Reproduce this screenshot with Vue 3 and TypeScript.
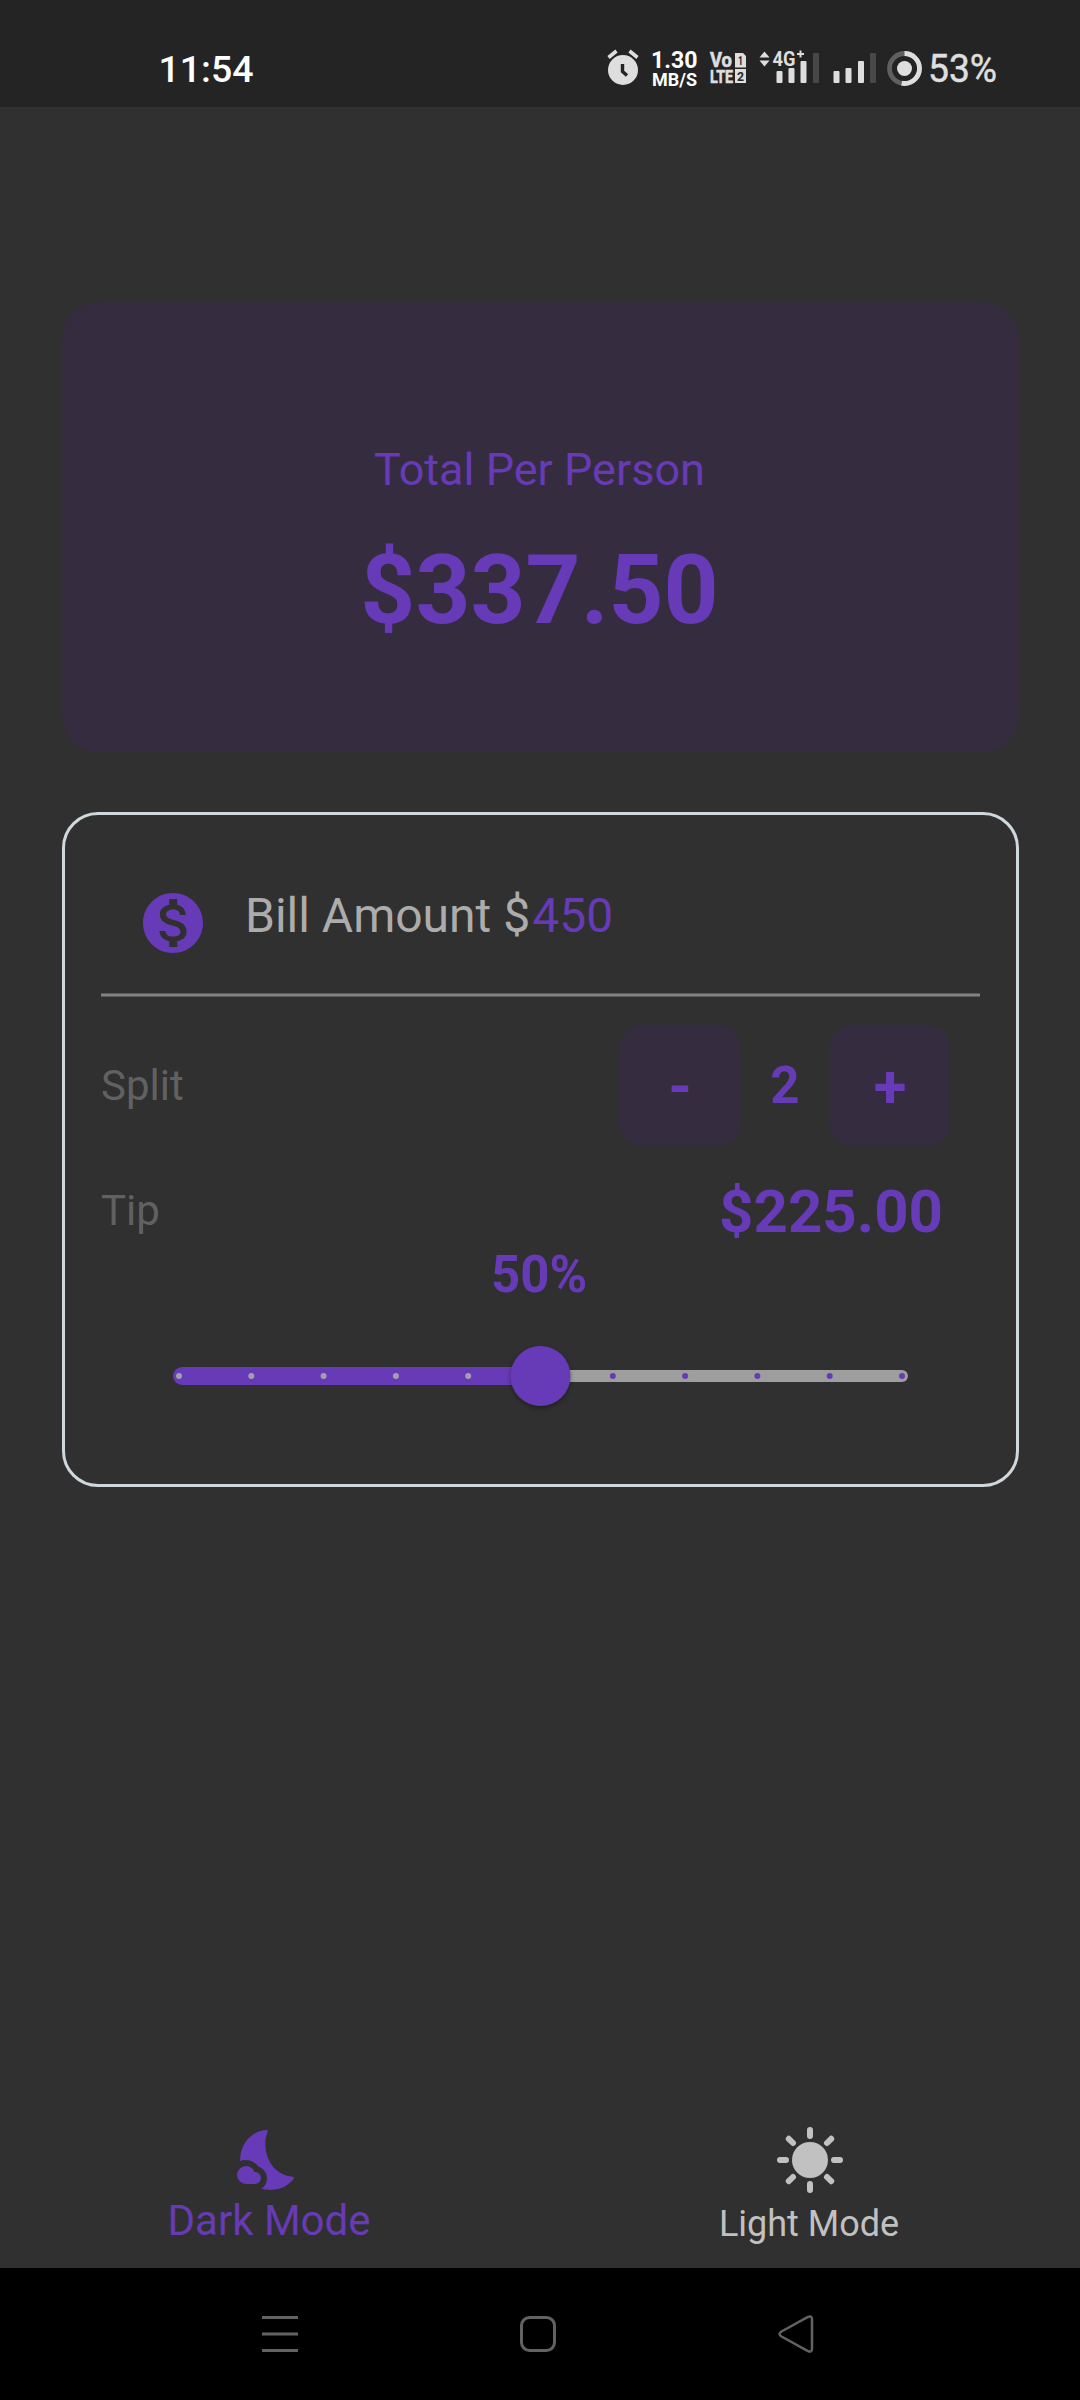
<script setup lang="ts">
import { computed, ref } from 'vue'

const bill = ref<number>(450)
const people = ref<number>(2)
const tipPercent = ref<number>(50)

const tip = computed<number>(() => (bill.value * tipPercent.value) / 100)
const perPerson = computed<number>(() => (bill.value + tip.value) / people.value)

const STOPS = 10
const TRACK_START = 6
const TRACK_LENGTH = 723
const stopX = (index: number): number => TRACK_START + (TRACK_LENGTH * index) / STOPS
const ticks = Array.from({ length: STOPS + 1 }, (_, i) => ({ x: stopX(i), value: i * 10 }))
const thumbX = computed<number>(() => stopX(tipPercent.value / 10))

const money = (value: number): string => `$${value.toFixed(2)}`

const changePeople = (delta: number): void => {
  people.value = Math.max(1, people.value + delta)
}
</script>

<template>
  <div class="screen">
    <header class="status">
      <svg width="1080" height="107" viewBox="0 0 1080 107">
        <text class="clock" x="158.500" y="82" textLength="95" lengthAdjust="spacingAndGlyphs">11:54</text>

        <!-- alarm -->
        <circle cx="623" cy="70" r="15" fill="#dedede" />
        <path d="M608.5 57.500l8-6.500M637.500 57.500l-8-6.500" stroke="#dedede" stroke-width="3.600" />
        <path d="M622.500 64v7.500l4.500 4" fill="none" stroke="#242424" stroke-width="3.400" />

        <text class="speed" x="651" y="68" font-size="24.500" textLength="46.500" lengthAdjust="spacingAndGlyphs">1.30</text>
        <text class="speed" x="652" y="86" font-size="18.500" textLength="45" lengthAdjust="spacingAndGlyphs">MB/S</text>

        <!-- VoLTE -->
        <text class="lte" x="710" y="67" font-size="19.500" textLength="22" lengthAdjust="spacingAndGlyphs">Vo</text>
        <text class="lte" x="710" y="83" font-size="18.500" textLength="23" lengthAdjust="spacingAndGlyphs">LTE</text>
        <path d="M735 53h8l3 3v11.500h-11zM735 69h11v14h-11z" fill="#dedede" />
        <text class="sim" x="738" y="65" font-size="12.500" textLength="5" lengthAdjust="spacingAndGlyphs">1</text>
        <text class="sim" x="737" y="81" font-size="13.500" textLength="7" lengthAdjust="spacingAndGlyphs">2</text>

        <!-- mobile data signal -->
        <path d="M759.500 57.500l5-6 5 6zM759.500 60.500l5 6 5-6z" fill="#dedede" />
        <text class="net" x="772.500" y="66" font-size="20.500" textLength="23" lengthAdjust="spacingAndGlyphs">4G</text>
        <path d="M797 54h7M800.500 50.500v7" stroke="#dedede" stroke-width="2" />
        <g fill="#dedede">
          <rect x="776.500" y="71" width="6" height="12" rx="1" />
          <rect x="788.500" y="68" width="6" height="15" rx="1" />
          <rect x="800.500" y="61" width="6" height="22" rx="1" />
          <rect x="833.500" y="71" width="6" height="12" rx="1" />
          <rect x="845.500" y="68" width="6" height="15" rx="1" />
          <rect x="858" y="61" width="6" height="22" rx="1" />
        </g>
        <g fill="#484848">
          <rect x="813" y="53" width="6" height="30" rx="1" />
          <rect x="870" y="53" width="6" height="30" rx="1" />
        </g>

        <!-- battery -->
        <circle cx="904.500" cy="68.500" r="15" fill="none" stroke="#606060" stroke-width="4.800" />
        <path d="M904.500 53.500a15 15 0 0 1 0 30q-1.500 0-2.800-.3" fill="none" stroke="#dedede" stroke-width="4.800" />
        <circle cx="904.500" cy="68.500" r="7.500" fill="#dedede" />
        <text class="battery" x="928" y="82" textLength="69" lengthAdjust="spacingAndGlyphs">53%</text>
      </svg>
    </header>

    <main class="content">
      <section class="total">
        <div class="total-label">Total Per Person</div>
        <div class="total-value">{{ money(perPerson) }}</div>
      </section>

      <section class="form">
        <div class="bill">
          <svg class="coin" width="72" height="72" viewBox="0 0 24 24">
            <path
              fill="#673ab7"
              d="M12 2C6.480 2 2 6.480 2 12s4.480 10 10 10 10-4.480 10-10S17.520 2 12 2zm1.410 16.090V20h-2.670v-1.930c-1.710-.36-3.160-1.460-3.270-3.400h1.960c.1 1.050.82 1.870 2.650 1.870 1.960 0 2.400-.98 2.400-1.590 0-.83-.44-1.610-2.670-2.140-2.480-.6-4.180-1.620-4.180-3.670 0-1.720 1.390-2.840 3.110-3.210V4h2.670v1.950c1.860.45 2.790 1.860 2.850 3.390H14.300c-.05-1.110-.64-1.870-2.220-1.870-1.500 0-2.400.68-2.400 1.640 0 .84.65 1.390 2.670 1.910s4.180 1.390 4.180 3.910c-.01 1.830-1.380 2.830-3.120 3.160z"
            />
          </svg>
          <div class="bill-text">Bill Amount $<span class="accent">{{ bill }}</span></div>
        </div>

        <div class="split">
          <span class="label">Split</span>
          <div class="stepper">
            <div class="step" @click="changePeople(-1)">-</div>
            <div class="people">{{ people }}</div>
            <div class="step" @click="changePeople(1)">+</div>
          </div>
        </div>

        <div class="tip">
          <span class="label">Tip</span>
          <span class="tip-value">{{ money(tip) }}</span>
        </div>

        <div class="percent">{{ tipPercent }}%</div>

        <svg class="slider" width="735" height="100" viewBox="0 0 735 100">
          <rect :x="thumbX" y="44" :width="735 - thumbX" height="12" rx="6" fill="#9e9e9e" />
          <rect x="0" y="41" :width="thumbX + 9" height="18" rx="9" fill="#673ab7" />
          <circle
            v-for="tick in ticks"
            :key="tick.value"
            :cx="tick.x"
            cy="50"
            r="3"
            :fill="tick.value <= tipPercent ? '#a3a0aa' : '#673ab7'"
          />
          <circle class="thumb" :cx="thumbX" cy="50" r="30" />
        </svg>
      </section>
    </main>

    <nav class="tabs">
      <div class="tab active">
        <svg width="72" height="72" viewBox="0 0 72 72">
          <g fill="#673ab7">
            <path d="M6 37C6 22 15 8 31.500 6.100C33.300 5.900 34.200 6.800 33.500 8.300C27.500 22 33.500 50 58 52.600C59.800 52.800 60.400 54 59.400 55.300C53.500 62.500 43 68.500 27.500 64.700C30.700 62.800 33 59 33 54.600C33 48.500 29 44.100 24.300 42.500C20.500 37.300 13 34.300 6 37Z" />
            <path d="M12 42c4 0 7.200 2.500 8.500 6h.5a6 6 0 0 1 0 12h-9a9 9 0 0 1 0-18z" />
          </g>
        </svg>
        <span>Dark Mode</span>
      </div>
      <div class="tab">
        <svg width="72" height="72" viewBox="-36 -36 72 72">
          <circle r="18" fill="#c1c1c1" />
          <path
            d="M0-30v6M0 24v6M-30 0h6M24 0h6M-21.200-21.200l4.200 4.200M21.200-21.200l-4.200 4.200M-21.200 21.200l4.200-4.200M21.200 21.200l-4.200-4.200"
            stroke="#c1c1c1"
            stroke-width="6"
            stroke-linecap="round"
          />
        </svg>
        <span>Light Mode</span>
      </div>
    </nav>

    <footer class="system">
      <svg width="1080" height="132" viewBox="0 0 1080 132" fill="none" stroke="#626262" stroke-width="3">
        <path d="M262 49.500h36M262 66h36M262 82.500h36" />
        <rect x="521.500" y="49.500" width="33" height="33" rx="8" />
        <path
          d="M781.500 63.500L807.500 49.200Q812 47 812 51.500V80.500Q812 85 807.500 82.800L781.500 68.500Q777.500 66 781.500 63.500Z"
          stroke-width="2.500"
        />
      </svg>
    </footer>
  </div>
</template>

<style>
body {
  margin: 0;
  background: #303030;
}
</style>

<style scoped>
.screen {
  display: flex;
  flex-direction: column;
  width: 1080px;
  height: 2400px;
  overflow: hidden;
  background: #303030;
  font-family: Roboto, sans-serif;
}

.screen svg {
  display: block;
}

.status {
  height: 107px;
  background: #242424;
}

.status text {
  fill: #dedede;
  font-family: Roboto, sans-serif;
  font-weight: 500;
}

.status .clock {
  fill: #fff;
  font-size: 37.5px;
}

.status .speed {
  fill: #fff;
  font-weight: 700;
}

.status .lte,
.status .net {
  font-weight: 700;
}

.status .lte {
  stroke: #dedede;
  stroke-width: 0.6px;
}

.status .sim {
  fill: #242424;
  font-weight: 700;
}

.status .battery {
  font-size: 38px;
  font-weight: 400;
  stroke: #dedede;
  stroke-width: 0.5px;
}

.content {
  flex: 1;
  padding: 195px 61px 0 62px;
}

.total {
  box-sizing: border-box;
  height: 450px;
  padding: 141px 2px 0 0;
  border-radius: 36px;
  background: #362c40;
  color: #673ab7;
  text-align: center;
}

.total-label {
  font-size: 45px;
  line-height: 53px;
}

.total-value {
  margin-top: 38px;
  font-size: 96px;
  font-weight: 700;
  line-height: 112px;
}

.form {
  box-sizing: border-box;
  height: 675px;
  margin-top: 60px;
  padding: 0 36px;
  border: 3px solid #cfd8dc;
  border-radius: 36px;
}

.bill {
  display: flex;
  box-sizing: border-box;
  height: 182px;
  padding: 72px 0 0 36px;
  background: linear-gradient(#5a5a5a 0 1px, #828282 1px 3px, #5a5a5a 3px) 0 100% / 100% 4px no-repeat;
}

.bill-text {
  margin: 1px 0 0 36px;
  color: #acacac;
  font-size: 48px;
  line-height: 56px;
}

.accent {
  margin-left: 2px;
  color: #673ab7;
}

.split {
  display: flex;
  align-items: center;
  justify-content: space-between;
  margin-top: 28px;
  padding-right: 30px;
}

.label {
  color: #616161;
  font-size: 42px;
  line-height: 50px;
}

.split .label {
  padding-top: 2px;
}

.stepper {
  display: flex;
  align-items: center;
}

.step {
  box-sizing: border-box;
  width: 120px;
  height: 120px;
  padding-top: 2px;
  border-radius: 21px;
  background: #362c40;
  color: #673ab7;
  font-size: 60px;
  font-weight: 700;
  line-height: 120px;
  text-align: center;
}

.people {
  width: 90px;
  padding-top: 1px;
  color: #673ab7;
  font-size: 51px;
  font-weight: 700;
  line-height: 60px;
  text-align: center;
}

.tip {
  display: flex;
  align-items: center;
  justify-content: space-between;
  height: 70px;
  margin-top: 31px;
  padding-right: 37px;
}

.tip-value {
  padding-top: 2px;
  color: #673ab7;
  font-size: 60px;
  font-weight: 700;
  line-height: 70px;
}

.percent {
  margin: -1px 3px 0 0;
  color: #673ab7;
  font-size: 51px;
  font-weight: 700;
  line-height: 60px;
  text-align: center;
}

.slider {
  margin: 21px 0 0 72px;
  overflow: visible;
}

.thumb {
  fill: #673ab7;
  filter: drop-shadow(0 2px 2px rgba(0, 0, 0, 0.35));
}

.tabs {
  display: flex;
  height: 144px;
}

.tab {
  display: flex;
  flex: 1;
  flex-direction: column;
  align-items: center;
  color: #c1c1c1;
  font-size: 36px;
  line-height: 42px;
}

.tab span {
  margin: 7px 2px 0 0;
}

.tab.active {
  color: #673ab7;
  font-size: 42px;
  line-height: 50px;
}

.tab.active span {
  margin-top: 0;
}

.system {
  height: 132px;
  background: #000;
}
</style>
